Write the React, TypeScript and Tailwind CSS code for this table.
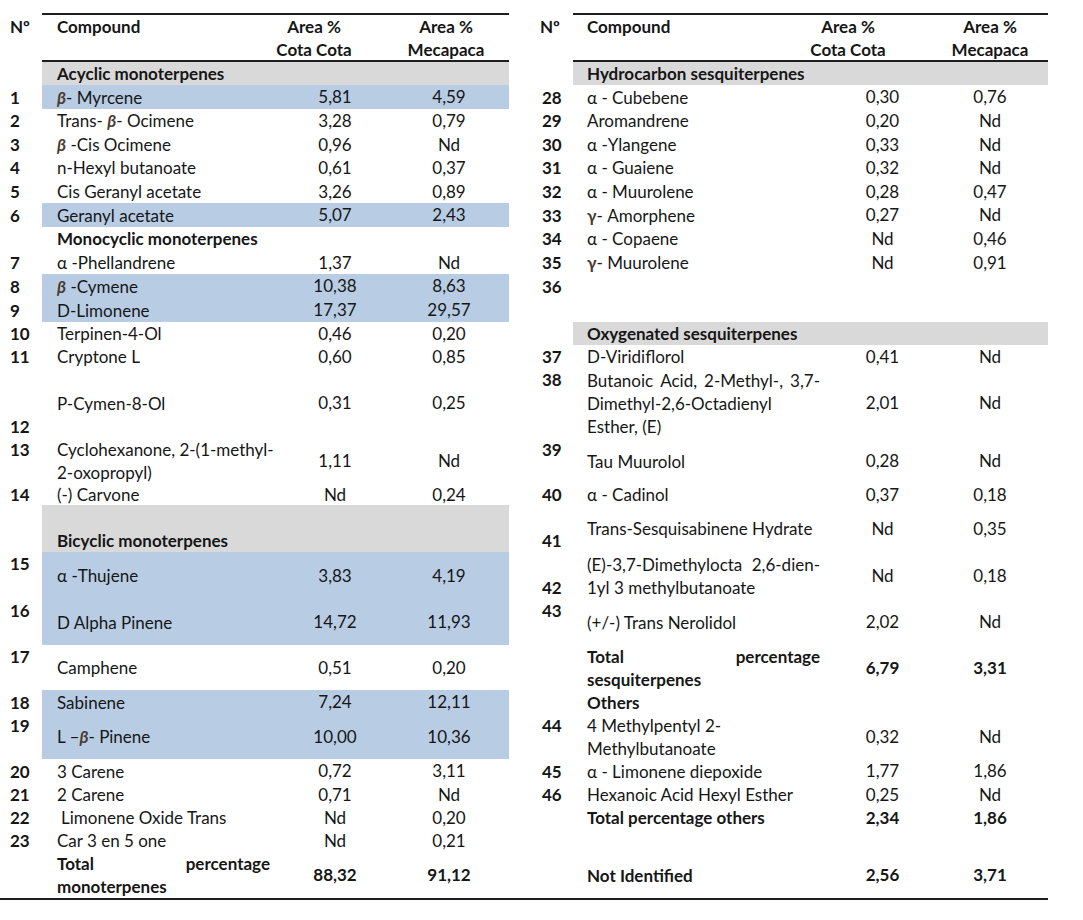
import React from 'react';

type Align = 'top' | 'center' | 'bottom';

type Half = {
  num?: string;
  numAt?: Align;
  name?: React.ReactNode;
  nameAt?: Align;
  cota?: string;
  meca?: string;
  bold?: boolean;
  bg?: 'grey' | 'blue';
};

type Row = { h: string; l: Half; r: Half };

const alignCls: Record<Align, string> = {
  top: 'items-start',
  center: 'items-center',
  bottom: 'items-end',
};

const bgCls = { grey: 'bg-[#d9d9d9]', blue: 'bg-[#b8cce4]' };

const Beta = () => <span className="italic font-bold text-[#4a3b2e]">β</span>;
const Gamma = () => <span className="font-bold text-[#4a3b2e]">γ</span>;

// first line spread to the column edge, as in the source document
const J = ({ words }: { words: string[] }) => (
  <div className="flex justify-between">
    {words.map((w, i) => (
      <span key={i}>{w}</span>
    ))}
  </div>
);

const rows: Row[] = [
  { h: 'h-[23px]', l: { name: 'Acyclic monoterpenes', bold: true, bg: 'grey' }, r: { name: 'Hydrocarbon sesquiterpenes', bold: true, bg: 'grey' } },
  { h: 'h-[24px]', l: { num: '1', name: <><Beta />- Myrcene</>, cota: '5,81', meca: '4,59', bg: 'blue' }, r: { num: '28', name: 'α - Cubebene', cota: '0,30', meca: '0,76' } },
  { h: 'h-[23.5px]', l: { num: '2', name: <>Trans- <Beta />- Ocimene</>, cota: '3,28', meca: '0,79' }, r: { num: '29', name: 'Aromandrene', cota: '0,20', meca: 'Nd' } },
  { h: 'h-[23.5px]', l: { num: '3', name: <><Beta /> -Cis Ocimene</>, cota: '0,96', meca: 'Nd' }, r: { num: '30', name: 'α -Ylangene', cota: '0,33', meca: 'Nd' } },
  { h: 'h-[23.5px]', l: { num: '4', name: 'n-Hexyl butanoate', cota: '0,61', meca: '0,37' }, r: { num: '31', name: 'α - Guaiene', cota: '0,32', meca: 'Nd' } },
  { h: 'h-[23.5px]', l: { num: '5', name: 'Cis Geranyl acetate', cota: '3,26', meca: '0,89' }, r: { num: '32', name: 'α - Muurolene', cota: '0,28', meca: '0,47' } },
  { h: 'h-[24px]', l: { num: '6', name: 'Geranyl acetate', cota: '5,07', meca: '2,43', bg: 'blue' }, r: { num: '33', name: <><Gamma />- Amorphene</>, cota: '0,27', meca: 'Nd' } },
  { h: 'h-[23.5px]', l: { name: 'Monocyclic monoterpenes', bold: true }, r: { num: '34', name: 'α - Copaene', cota: 'Nd', meca: '0,46' } },
  { h: 'h-[23.5px]', l: { num: '7', name: 'α -Phellandrene', cota: '1,37', meca: 'Nd' }, r: { num: '35', name: <><Gamma />- Muurolene</>, cota: 'Nd', meca: '0,91' } },
  { h: 'h-[24px]', l: { num: '8', name: <><Beta /> -Cymene</>, cota: '10,38', meca: '8,63', bg: 'blue' }, r: { num: '36' } },
  { h: 'h-[24px]', l: { num: '9', name: 'D-Limonene', cota: '17,37', meca: '29,57', bg: 'blue' }, r: {} },
  { h: 'h-[23px]', l: { num: '10', name: 'Terpinen-4-Ol', cota: '0,46', meca: '0,20' }, r: { name: 'Oxygenated sesquiterpenes', bold: true, bg: 'grey' } },
  { h: 'h-[23px]', l: { num: '11', name: 'Cryptone L', cota: '0,60', meca: '0,85' }, r: { num: '37', name: 'D-Viridiflorol', cota: '0,41', meca: 'Nd' } },
  {
    h: 'h-[70px]',
    l: { num: '12', numAt: 'bottom', name: 'P-Cymen-8-Ol', cota: '0,31', meca: '0,25' },
    r: {
      num: '38',
      numAt: 'top',
      name: (
        <>
          <J words={['Butanoic', 'Acid,', '2-Methyl-,', '3,7-']} />
          <div>Dimethyl-2,6-Octadienyl</div>
          <div>Esther, (E)</div>
        </>
      ),
      cota: '2,01',
      meca: 'Nd',
    },
  },
  {
    h: 'h-[46px]',
    l: {
      num: '13',
      numAt: 'top',
      name: (
        <>
          <div>Cyclohexanone, 2-(1-methyl-</div>
          <div>2-oxopropyl)</div>
        </>
      ),
      cota: '1,11',
      meca: 'Nd',
    },
    r: { num: '39', numAt: 'top', name: 'Tau Muurolol', cota: '0,28', meca: 'Nd' },
  },
  { h: 'h-[21px]', l: { num: '14', name: '(-) Carvone', cota: 'Nd', meca: '0,24' }, r: { num: '40', name: 'α - Cadinol', cota: '0,37', meca: '0,18' } },
  {
    h: 'h-[47px]',
    l: { name: 'Bicyclic monoterpenes', nameAt: 'bottom', bold: true, bg: 'grey' },
    r: { num: '41', numAt: 'bottom', name: 'Trans-Sesquisabinene Hydrate', cota: 'Nd', meca: '0,35' },
  },
  {
    h: 'h-[47px]',
    l: { num: '15', numAt: 'top', name: 'α -Thujene', cota: '3,83', meca: '4,19', bg: 'blue' },
    r: {
      num: '42',
      numAt: 'bottom',
      name: (
        <>
          <J words={['(E)-3,7-Dimethylocta', '2,6-dien-']} />
          <div>1yl 3 methylbutanoate</div>
        </>
      ),
      cota: 'Nd',
      meca: '0,18',
    },
  },
  {
    h: 'h-[46px]',
    l: { num: '16', numAt: 'top', name: 'D Alpha Pinene', cota: '14,72', meca: '11,93', bg: 'blue' },
    r: { num: '43', numAt: 'top', name: '(+/-) Trans Nerolidol', cota: '2,02', meca: 'Nd' },
  },
  {
    h: 'h-[45px]',
    l: { num: '17', numAt: 'top', name: 'Camphene', cota: '0,51', meca: '0,20' },
    r: {
      name: (
        <>
          <J words={['Total', 'percentage']} />
          <div>sesquiterpenes</div>
        </>
      ),
      cota: '6,79',
      meca: '3,31',
      bold: true,
    },
  },
  { h: 'h-[24px]', l: { num: '18', name: 'Sabinene', cota: '7,24', meca: '12,11', bg: 'blue' }, r: { name: 'Others', bold: true } },
  {
    h: 'h-[45px]',
    l: { num: '19', numAt: 'top', name: <>L –<Beta />- Pinene</>, cota: '10,00', meca: '10,36', bg: 'blue' },
    r: {
      num: '44',
      numAt: 'top',
      name: (
        <>
          <div>4 Methylpentyl 2-</div>
          <div>Methylbutanoate</div>
        </>
      ),
      cota: '0,32',
      meca: 'Nd',
    },
  },
  { h: 'h-[24px]', l: { num: '20', name: '3 Carene', cota: '0,72', meca: '3,11' }, r: { num: '45', name: 'α - Limonene diepoxide', cota: '1,77', meca: '1,86' } },
  { h: 'h-[23px]', l: { num: '21', name: '2 Carene', cota: '0,71', meca: 'Nd' }, r: { num: '46', name: 'Hexanoic Acid Hexyl Esther', cota: '0,25', meca: 'Nd' } },
  { h: 'h-[23px]', l: { num: '22', name: <span className="pl-[4px]">Limonene Oxide Trans</span>, cota: 'Nd', meca: '0,20' }, r: { name: 'Total percentage others', cota: '2,34', meca: '1,86', bold: true } },
  { h: 'h-[23px]', l: { num: '23', name: 'Car 3 en 5 one', cota: 'Nd', meca: '0,21' }, r: {} },
  {
    h: 'h-[46px]',
    l: {
      name: (
        <>
          <J words={['Total', 'percentage']} />
          <div>monoterpenes</div>
        </>
      ),
      cota: '88,32',
      meca: '91,12',
      bold: true,
    },
    r: { name: 'Not Identified', cota: '2,56', meca: '3,71', bold: true },
  },
];

function HalfRow({ cell, side }: { cell: Half; side: 'l' | 'r' }) {
  const left = side === 'l';
  return (
    <div className={`flex h-full ${left ? 'w-[509px]' : 'w-[508px]'}`}>
      <div className={`flex font-bold leading-[23px] ${alignCls[cell.numAt ?? 'center']} ${left ? 'w-[42px] pl-[10px]' : 'w-[33px] pl-[2px]'}`}>
        {cell.num}
      </div>
      <div className={`flex flex-1 ${cell.bg ? bgCls[cell.bg] : ''} ${cell.bold ? 'font-bold' : ''}`}>
        <div className={`flex ${alignCls[cell.nameAt ?? 'center']} ${left ? 'w-[228px] pl-[15px]' : 'w-[247px] pl-[14px]'}`}>
          <div className="w-full leading-[23px] whitespace-nowrap">{cell.name}</div>
        </div>
        <div className={`flex items-center justify-center ${left ? 'w-[130px]' : 'w-[125px]'}`}>{cell.cota}</div>
        <div className={`flex items-center justify-center ${left ? 'w-[98px]' : 'w-[90px]'}`}>{cell.meca}</div>
      </div>
    </div>
  );
}

function HeaderHalf({ side }: { side: 'l' | 'r' }) {
  const left = side === 'l';
  return (
    <div className={`flex ${left ? 'w-[509px]' : 'w-[508px]'}`}>
      <div className={`pt-[2px] leading-[23px] ${left ? 'w-[42px] pl-[10px]' : 'w-[33px]'}`}>Nº</div>
      <div className="flex-1 flex flex-col">
        <div className="h-[2px] bg-[#1e1e1e]" />
        <div className="flex h-[45px] leading-[23px]">
          <div className={left ? 'w-[208px] pl-[15px]' : 'w-[209px] pl-[14px]'}>Compound</div>
          <div className={`text-center ${left ? 'w-[128px]' : 'w-[132px]'}`}>
            <div>Area %</div>
            <div>Cota Cota</div>
          </div>
          <div className={left ? 'w-[14px]' : 'w-[26px]'} />
          <div className={`text-center ${left ? 'w-[108px]' : 'w-[100px]'}`}>
            <div>Area %</div>
            <div>Mecapaca</div>
          </div>
        </div>
        <div className="h-[2px] bg-[#1e1e1e]" />
      </div>
    </div>
  );
}

export default function App() {
  return (
    <div className="w-[1083px] h-[920px] bg-white pt-[13px] font-['Lato',sans-serif] text-[17px] text-[#161616]">
      <div className="flex font-bold">
        <HeaderHalf side="l" />
        <div className="w-[31px]" />
        <HeaderHalf side="r" />
      </div>
      {rows.map((row, i) => (
        <div key={i} className={`flex ${row.h}`}>
          <HalfRow cell={row.l} side="l" />
          <div className="w-[31px]" />
          <HalfRow cell={row.r} side="r" />
        </div>
      ))}
      <div className="w-[1048px] h-[2px] bg-[#1e1e1e]" />
    </div>
  );
}
